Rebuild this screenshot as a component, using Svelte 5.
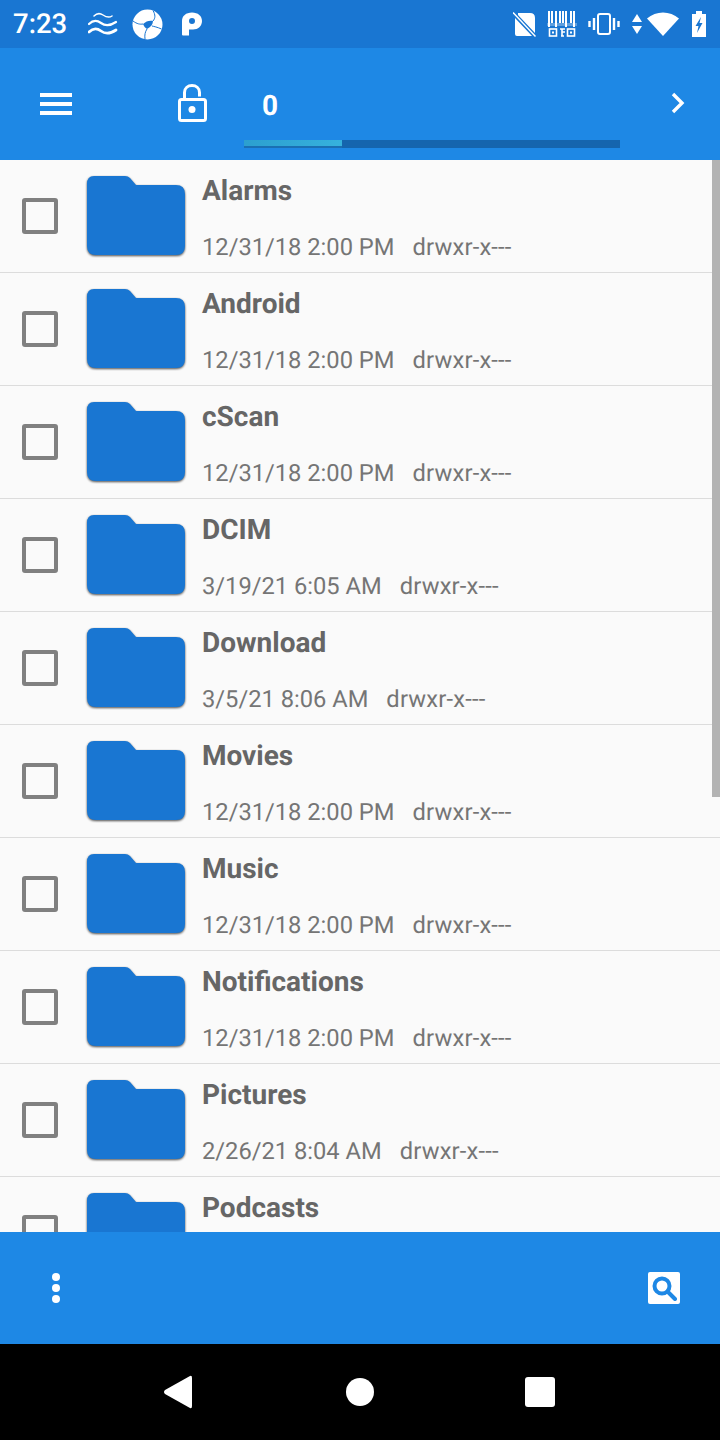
<script>
  const folders = [
    { name: "Alarms", date: "12/31/18 2:00 PM" },
    { name: "Android", date: "12/31/18 2:00 PM" },
    { name: "cScan", date: "12/31/18 2:00 PM" },
    { name: "DCIM", date: "3/19/21 6:05 AM" },
    { name: "Download", date: "3/5/21 8:06 AM" },
    { name: "Movies", date: "12/31/18 2:00 PM" },
    { name: "Music", date: "12/31/18 2:00 PM" },
    { name: "Notifications", date: "12/31/18 2:00 PM" },
    { name: "Pictures", date: "2/26/21 8:04 AM" },
    { name: "Podcasts", date: "12/31/18 2:00 PM" },
  ]
</script>

<div class="screen">
  <header class="status">
    <span class="time">7:23</span>
    <svg class="ic-waves" width="30" height="24" viewBox="0 0 30 24" fill="none" stroke="#fff" stroke-width="2.200" stroke-linecap="round">
      <path d="M6 4c3-3 6-3 9-1s6 3 9 1" stroke-width="1.500" />
      <path d="M1 12c4-4 8-4 12-1s9 3 15-1" />
      <path d="M1 20c4-4 8-4 12-1s9 3 15-1" stroke-width="2.800" />
    </svg>
    <svg class="ic-shutter" width="31" height="31" viewBox="0 0 31 31">
      <circle cx="15.500" cy="15.500" r="15" fill="#fff" />
      <path fill="#1976d2" d="M11 15 C14 12 18 11 21 12 C21 15 19 18 15 20 C13 19 12 17 11 15 Z" />
      <path d="M21 1.500 C23.500 6 23.500 9 21 12 M29.500 20 C25 18 22 17.500 20 17 M13 30 C12.500 26 13 23 15 20 M1 12 C5 15 8 15.500 11 15" fill="none" stroke="#1976d2" stroke-width="1" />
    </svg>
    <svg class="ic-p" width="20" height="24" viewBox="0 0 20 24">
      <path fill-rule="evenodd" fill="#fff" d="M0 9 C0 4 4 0.500 10 0.500 C16 0.500 20 4 20 9 C20 14 16 17.500 11 17.500 H7 V23.500 H1 Q0 23.500 0 22.500 Z M7 9 C7 11 8 12 10 12 C12 12 13 11 13 9 C13 7 12 6 10 6 C8 6 7 7 7 9 Z" />
    </svg>
    <div class="status-right">
      <svg class="ic-nosim" width="23" height="25" viewBox="0 0 23 25">
        <path fill="#fff" d="M5 1 H17 Q22 1 22 6 V21 L5 3 Z M2 6 L19 24 H4 Q2 24 2 22 Z" />
        <path d="M0 0.500 L22.500 24.500" stroke="#fff" stroke-width="1.500" />
      </svg>
      <svg class="ic-code" width="30" height="28" viewBox="0 0 30 28" fill="none" stroke="#fff">
        <path d="M2 1 V17 M5 1 V13 M9 1 V17 M13 1 V13 M16 1 V13 M19 1 V17 M24 1 V13 M27 1 V17" stroke-width="2" />
        <path d="M0 14.500 H30" stroke-width="3" opacity=".3" />
        <rect x="2.500" y="19" width="7" height="7" stroke-width="1.600" />
        <rect x="20.500" y="19" width="7" height="7" stroke-width="1.600" />
        <rect x="5" y="21.500" width="2" height="2" fill="#fff" stroke="none" />
        <rect x="23" y="21.500" width="2" height="2" fill="#fff" stroke="none" />
        <path d="M13 19 H18 M15 22 H18 M14 26 H17 M15 19 V26" stroke-width="1.600" />
      </svg>
      <svg class="ic-vib" width="34" height="24" viewBox="0 0 34 24" fill="none" stroke="#fff" stroke-width="2">
        <rect x="11" y="2" width="12" height="20" rx="2" />
        <path d="M7 6 V18 M27 6 V18 M2.500 9 V15 M31.500 9 V15" stroke-width="2.400" />
      </svg>
      <svg class="ic-arrows" width="12" height="24" viewBox="0 0 12 24" fill="#fff">
        <path d="M6 2 L11 10 H1 Z M1 14 H11 L6 22 Z" />
      </svg>
      <svg class="ic-wifi" width="32" height="24" viewBox="0 0 32 24" fill="#fff">
        <path d="M0 6.500 C9 -1.500 23 -1.500 32 6.500 L16 24 Z" />
      </svg>
      <svg class="ic-batt" width="14" height="26" viewBox="0 0 14 26">
        <path fill="#fff" d="M4 0 H10 V3 H14 V26 H0 V3 H4 Z" />
        <path fill="#1976d2" d="M9 6 L3.500 15 H6.500 L5 22 L10.500 12 H7.500 Z" />
      </svg>
    </div>
  </header>

  <div class="toolbar">
    <svg class="ic-menu" width="32" height="24" viewBox="0 0 32 24" fill="#fff">
      <rect y="1" width="32" height="4" />
      <rect y="10" width="32" height="4" />
      <rect y="19" width="32" height="4" />
    </svg>
    <svg class="ic-lock" width="30" height="38" viewBox="0 0 30 38" fill="none" stroke="#fff" stroke-width="3">
      <rect x="1.500" y="15.500" width="26" height="21" rx="2" />
      <path d="M6.500 14 V8.500 C6.500 4 10 1.500 14 1.500 C18 1.500 21.500 4 21.500 8.500 V12.500" />
      <circle cx="14" cy="25.500" r="3.500" fill="#fff" stroke="none" />
    </svg>
    <div class="counter">
      <span class="count">0</span>
      <div class="progress">
        <div class="progress-fill"></div>
      </div>
    </div>
    <svg class="ic-next" width="14" height="22" viewBox="0 0 14 22" fill="none" stroke="#fff" stroke-width="3.400">
      <path d="M2 2 L11 11 L2 20" />
    </svg>
  </div>

  <main class="list">
    {#each folders as folder}
      <div class="row">
        <span class="check"></span>
        <svg class="folder" width="100" height="82" viewBox="0 0 100 82">
          <path fill="#1976d2" d="M8 0 H39 Q42 0 44 2 L50 9 H90 Q99 9 99 18 V70 Q99 79 90 79 H10 Q1 79 1 70 V8 Q1 0 8 0 Z" />
        </svg>
        <div class="info">
          <div class="name">{folder.name}</div>
          <div class="meta">
            <span>{folder.date}</span>
            <span class="perms">drwxr-x---</span>
          </div>
        </div>
      </div>
    {/each}
    <div class="scrollbar"></div>
  </main>

  <div class="bottom">
    <div class="dots">
      <i></i>
      <i></i>
      <i></i>
    </div>
    <div class="search">
      <svg width="26" height="26" viewBox="0 0 26 26" fill="none" stroke="#1e88e5" stroke-width="4">
        <circle cx="11" cy="11" r="7.500" />
        <path d="M17 17 L24 24" stroke-linecap="round" />
      </svg>
    </div>
  </div>

  <nav class="nav">
    <svg width="30" height="34" viewBox="0 0 30 34" fill="#fff">
      <path d="M27 1 Q29 0 29 3 V31 Q29 34 27 33 L2 19 Q0 17 2 15 Z" />
    </svg>
    <span class="home"></span>
    <span class="recent"></span>
  </nav>
</div>

<style>
  :global(body) {
    margin: 0;
    background: #fafafa;
  }

  .screen {
    width: 720px;
    height: 1440px;
    display: flex;
    flex-direction: column;
    overflow: hidden;
    font-family: Roboto, "Liberation Sans", sans-serif;
    text-rendering: geometricPrecision;
  }

  .status {
    height: 48px;
    flex: none;
    background: #1976d2;
    display: flex;
    align-items: center;
    padding: 0 14px 0 13px;
    color: #fff;
  }

  .time {
    font-size: 27.500px;
    line-height: 48px;
    font-weight: 500;
    width: 75px;
  }

  .ic-shutter {
    margin-left: 14px;
  }

  .ic-p {
    margin-left: 19px;
  }

  .status-right {
    margin-left: auto;
    display: flex;
    align-items: center;
  }

  .ic-code {
    margin-left: 11px;
  }

  .ic-vib {
    margin-left: 10px;
  }

  .ic-arrows {
    margin-left: 10px;
  }

  .ic-wifi {
    margin-left: 4px;
  }

  .ic-batt {
    margin-left: 13px;
  }

  .toolbar {
    height: 112px;
    flex: none;
    background: #1e88e5;
    display: flex;
    align-items: center;
    padding-left: 40px;
  }

  .ic-lock {
    margin-left: 106px;
    margin-top: -2px;
  }

  .counter {
    position: relative;
    margin-left: 36px;
    width: 376px;
    height: 112px;
  }

  .count {
    display: block;
    padding: 41px 0 0 18px;
    font-size: 28px;
    line-height: 33px;
    font-weight: 700;
    color: #fff;
  }

  .progress {
    position: absolute;
    left: 0;
    right: 0;
    top: 92px;
    height: 8px;
    background: #1565ae;
  }

  .progress-fill {
    width: 98px;
    height: 6px;
    background: linear-gradient(90deg, #2c9fcf, #36b1dd);
    box-shadow: 0 2px 0 #1a6fb3;
  }

  .ic-next {
    margin-left: 51px;
    margin-top: -2px;
  }

  .list {
    position: relative;
    flex: 1;
    min-height: 0;
    overflow: hidden;
    background: #fafafa;
  }

  .row {
    height: 113px;
    box-sizing: border-box;
    display: flex;
    border-bottom: 1px solid #dcdcdc;
  }

  .check {
    flex: none;
    width: 36px;
    height: 36px;
    box-sizing: border-box;
    margin: 38px 0 0 22px;
    border: 4px solid #808080;
    border-radius: 3px;
  }

  .folder {
    flex: none;
    margin: 16px 0 0 28px;
    filter: drop-shadow(0 1.500px 1px rgba(0, 0, 0, 0.7));
  }

  .info {
    margin-left: 16px;
  }

  .name {
    padding-top: 15px;
    font-size: 28px;
    line-height: 32px;
    font-weight: 700;
    color: #666;
  }

  .meta {
    display: flex;
    gap: 18px;
    margin-top: 26px;
    font-size: 23.700px;
    line-height: 28px;
    color: #757575;
  }

  .perms {
    letter-spacing: 0.2px;
  }

  .scrollbar {
    position: absolute;
    top: 0;
    right: 0;
    width: 8px;
    height: 637px;
    background: #b3b3b3;
  }

  .bottom {
    height: 112px;
    flex: none;
    background: #1e88e5;
    display: flex;
    align-items: center;
    justify-content: space-between;
    padding: 0 40px 0 52px;
  }

  .dots {
    display: flex;
    flex-direction: column;
    gap: 3px;
  }

  .dots i {
    width: 8px;
    height: 8px;
    border-radius: 50%;
    background: #fff;
  }

  .search {
    width: 32px;
    height: 32px;
    background: #fff;
    border-radius: 2px;
    display: flex;
    align-items: center;
    justify-content: center;
  }

  .nav {
    height: 96px;
    flex: none;
    background: #000;
    display: flex;
    align-items: center;
    padding-left: 163px;
  }

  .home {
    width: 28px;
    height: 28px;
    border-radius: 50%;
    background: #fff;
    margin-left: 153px;
  }

  .recent {
    width: 30px;
    height: 30px;
    border-radius: 3px;
    background: #fff;
    margin-left: 151px;
  }
</style>
